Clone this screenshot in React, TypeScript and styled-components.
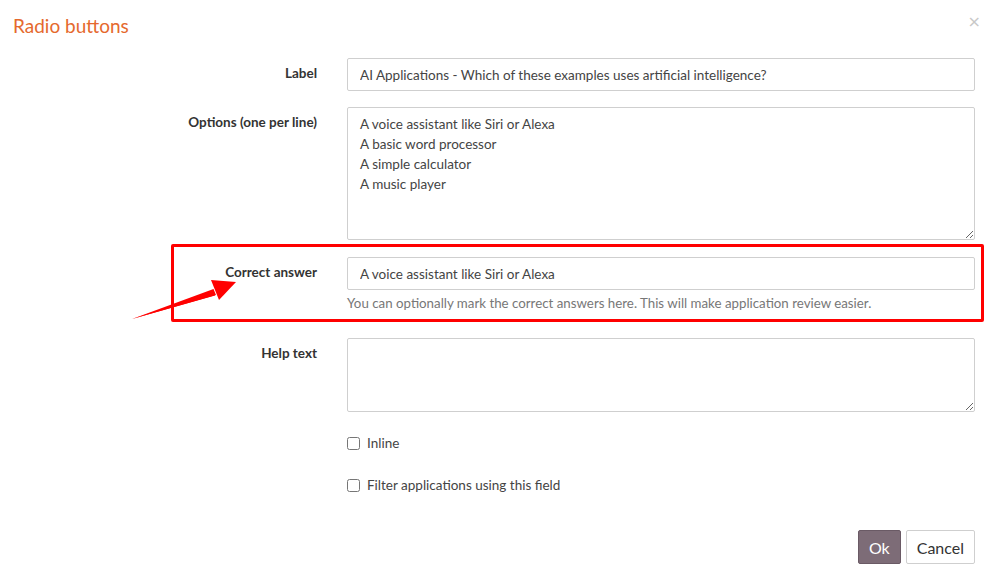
import styled, { createGlobalStyle } from "styled-components";

const GlobalStyle = createGlobalStyle`
  html, body {
    margin: 0;
    padding: 0;
    background: #fff;
  }
  body {
    font-family: Lato, "Noto Sans", sans-serif;
    font-size: 14px;
    color: #333;
  }
  * {
    box-sizing: border-box;
  }
`;

const Modal = styled.div`
  position: relative;
  width: 990px;
  height: 582px;
  background: #fff;
  overflow: hidden;
`;

const Header = styled.div`
  display: flex;
  justify-content: space-between;
  align-items: flex-start;
  padding: 14px 9px 0 13px;
  height: 58px;
`;

const Title = styled.h4`
  margin: 0;
  font-size: 19px;
  font-weight: 400;
  color: #e5692e;
  line-height: 24px;
`;

const Close = styled.button`
  border: none;
  background: none;
  padding: 0;
  margin-top: -2px;
  font-size: 16px;
  line-height: 20px;
  color: #c8c8c8;
  font-family: "DejaVu Sans", sans-serif;
  cursor: pointer;
`;

const Body = styled.form`
  display: flex;
  flex-direction: column;
  padding: 0 15px 0 0;
`;

const Row = styled.div<{ $gap?: number; $highlight?: boolean }>`
  position: relative;
  display: grid;
  grid-template-columns: 317px 1fr;
  column-gap: 30px;
  margin-bottom: ${(p) => p.$gap ?? 16}px;

  ${(p) =>
    p.$highlight &&
    `
    &::after {
      content: "";
      position: absolute;
      left: 171px;
      right: -9px;
      top: -13px;
      bottom: -10px;
      border: 3px solid #ff0000;
      border-radius: 2px;
      pointer-events: none;
    }
  `}
`;

const Label = styled.label`
  text-align: right;
  font-weight: 700;
  font-size: 13.5px;
  color: #333;
  padding-top: 7px;
  line-height: 17px;
`;

const Field = styled.div`
  display: flex;
  flex-direction: column;
`;

const Input = styled.input`
  height: 33px;
  width: 100%;
  border: 1px solid #cfcfcf;
  border-radius: 2px;
  padding: 0 12px;
  font-family: inherit;
  font-size: 13.5px;
  color: #444;
  background: #fff;
`;

const TextArea = styled.textarea<{ $h: number }>`
  height: ${(p) => p.$h}px;
  width: 100%;
  border: 1px solid #cfcfcf;
  border-radius: 2px;
  padding: 6px 12px;
  font-family: inherit;
  font-size: 13.5px;
  line-height: 20px;
  color: #444;
  resize: vertical;
  background: #fff;
`;

const HelpBlock = styled.span`
  margin-top: 4px;
  font-size: 13.3px;
  color: #777;
  line-height: 18px;
`;

const CheckRow = styled.label`
  display: flex;
  align-items: center;
  gap: 7px;
  font-size: 13.5px;
  color: #444;
  height: 20px;

  input {
    margin: 0;
    width: 13px;
    height: 13px;
  }
`;

const Footer = styled.div`
  display: flex;
  justify-content: flex-end;
  gap: 5px;
  padding: 0 15px 0 0;
  margin-top: 35px;
`;

const Button = styled.button<{ $primary?: boolean }>`
  height: 34px;
  padding: 0 10px;
  font-family: inherit;
  font-size: 16px;
  border-radius: 2px;
  border: 1px solid ${(p) => (p.$primary ? "#6a5a65" : "#cfcfcf")};
  background: ${(p) => (p.$primary ? "#7d6c77" : "#fff")};
  color: ${(p) => (p.$primary ? "#fff" : "#333")};
  cursor: pointer;
`;

const Arrow = styled.svg`
  position: absolute;
  left: 0;
  top: 0;
  pointer-events: none;
`;

export default function App() {
  return (
    <>
      <GlobalStyle />
      <Modal>
        <Header>
          <Title>Radio buttons</Title>
          <Close type="button">×</Close>
        </Header>
        <Body>
          <Row>
            <Label>Label</Label>
            <Input defaultValue="AI Applications - Which of these examples uses artificial intelligence?" />
          </Row>
          <Row $gap={17}>
            <Label>Options (one per line)</Label>
            <TextArea
              $h={133}
              defaultValue={
                "A voice assistant like Siri or Alexa\nA basic word processor\nA simple calculator\nA music player"
              }
            />
          </Row>
          <Row $gap={26} $highlight>
            <Label>Correct answer</Label>
            <Field>
              <Input defaultValue="A voice assistant like Siri or Alexa" />
              <HelpBlock>
                You can optionally mark the correct answers here. This will make application review easier.
              </HelpBlock>
            </Field>
          </Row>
          <Row $gap={21}>
            <Label>Help text</Label>
            <TextArea $h={74} />
          </Row>
          <Row $gap={22}>
            <span />
            <CheckRow>
              <input type="checkbox" />
              Inline
            </CheckRow>
          </Row>
          <Row $gap={0}>
            <span />
            <CheckRow>
              <input type="checkbox" />
              Filter applications using this field
            </CheckRow>
          </Row>
        </Body>
        <Footer>
          <Button $primary type="button">Ok</Button>
          <Button type="button">Cancel</Button>
        </Footer>
        <Arrow width="990" height="582" viewBox="0 0 990 582">
          <path d="M132 319 L214 292 L215 295.5 Z" fill="#ff0000" />
          <path d="M132 319 L213.5 289 L216 295 Z" fill="#ff0000" />
          <path d="M236 282 L211 280 L219 300 Z" fill="#ff0000" />
        </Arrow>
      </Modal>
    </>
  );
}
